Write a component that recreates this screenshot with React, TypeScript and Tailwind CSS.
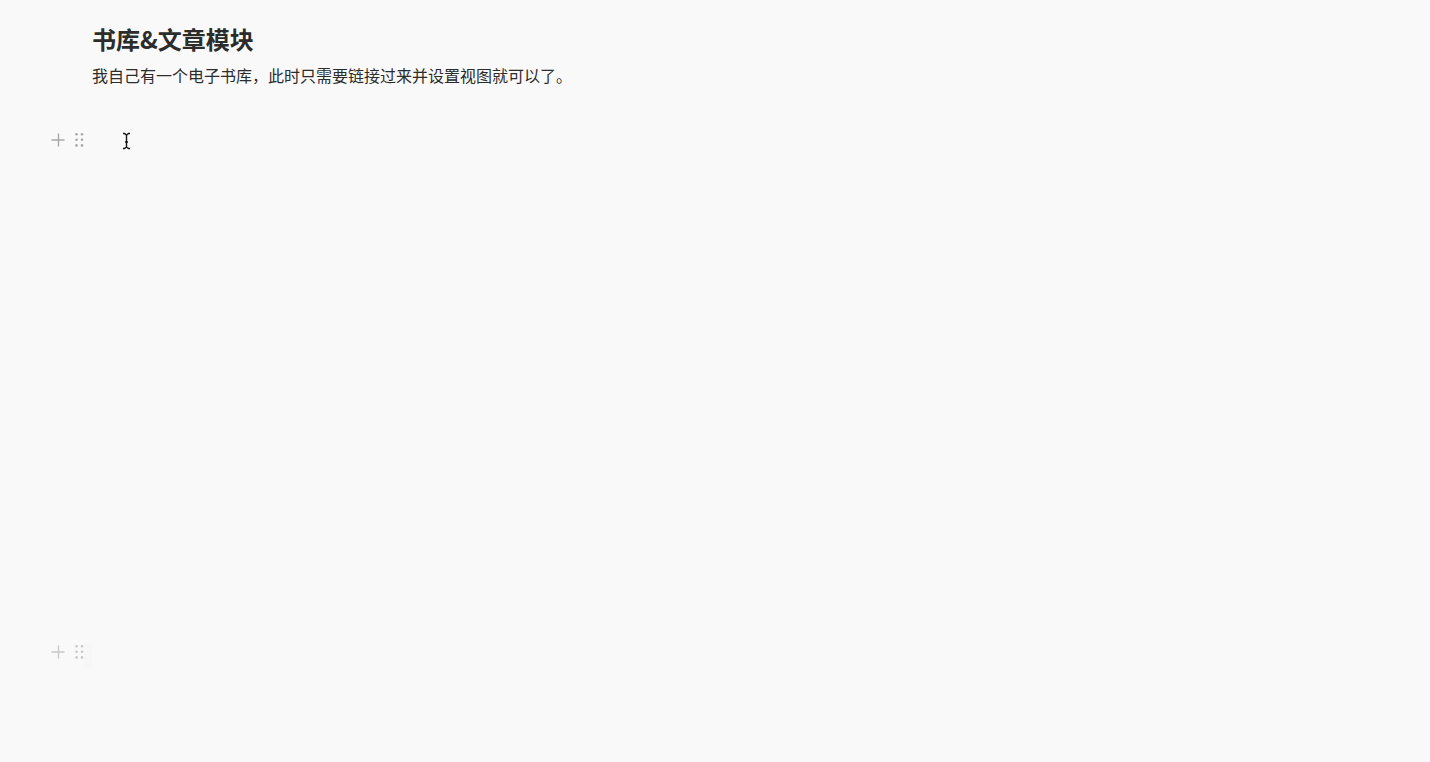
import { clsx } from 'clsx';

type HandleState = 'active' | 'fading';

interface Block {
  id: number;
  type: 'heading' | 'text';
  text?: string;
  handle?: HandleState;
}

// Heading and intro, followed by the empty blocks of the page
const blocks: Block[] = [
  { id: 1, type: 'heading', text: '书库&文章模块' },
  { id: 2, type: 'text', text: '我自己有一个电子书库，此时只需要链接过来并设置视图就可以了。' },
  { id: 3, type: 'text' },
  { id: 4, type: 'text', handle: 'active' },
  ...Array.from({ length: 15 }, (_, i): Block => ({ id: 5 + i, type: 'text' })),
  { id: 20, type: 'text', handle: 'fading' },
];

function PlusIcon() {
  return (
    <svg width="20" height="20" viewBox="0 0 20 20" fill="none" stroke="currentColor" aria-hidden="true">
      <path d="M10.5 3.5v13M3.5 10h13" strokeWidth="1.4" />
    </svg>
  );
}

function GripIcon() {
  return (
    <svg width="20" height="20" viewBox="0 0 20 20" fill="currentColor" aria-hidden="true">
      {[4.3, 9.8, 15.4].map((y) => (
        <g key={y}>
          <circle cx="7.5" cy={y} r="1.3" />
          <circle cx="13" cy={y} r="1.3" />
        </g>
      ))}
    </svg>
  );
}

function BlockHandle({ state }: { state: HandleState }) {
  return (
    <div
      className={clsx(
        'relative flex items-center gap-px',
        state === 'active' ? 'text-[#a8a8a8]' : 'text-[#c8c8c8]'
      )}
    >
      <button type="button" aria-label="添加块" className="size-5">
        <PlusIcon />
      </button>
      <button type="button" aria-label="拖动块" className="size-5">
        <GripIcon />
      </button>
    </div>
  );
}

function TextCursor() {
  return (
    <svg
      className="pointer-events-none absolute top-2 left-7 text-[#161616]"
      width="12"
      height="18"
      viewBox="0 0 12 18"
      fill="none"
      stroke="currentColor"
      strokeWidth="1.4"
      aria-hidden="true"
    >
      <path d="M3 1.5h1.5L6.5 3l2-1.5H10M6.5 3v12M3 16.5h1.5l2-1.5 2 1.5H10M5 10h3" />
    </svg>
  );
}

function BlockRow({ block }: { block: Block }) {
  return (
    <div className={clsx('flex items-center', block.type === 'heading' ? 'h-10' : 'h-8')}>
      <div className="relative flex w-23 shrink-0 justify-end pr-[3px]">
        {block.handle === 'fading' && (
          <span className="absolute top-0 right-0 h-7 w-2 bg-[#f7f7f7]" />
        )}
        {block.handle && <BlockHandle state={block.handle} />}
      </div>
      <div className="relative h-full min-w-0 flex-1">
        {block.type === 'heading' ? (
          <h2 className="text-2xl leading-[38px] font-bold">{block.text}</h2>
        ) : (
          <p className="text-base leading-[30px]">{block.text}</p>
        )}
        {block.handle === 'active' && <TextCursor />}
      </div>
    </div>
  );
}

export default function App() {
  return (
    <main
      lang="zh-CN"
      className="min-h-screen border-r-8 border-b border-r-[#faf8fb] border-b-[#f6f6f6] bg-[#f9f9f9] pt-5 font-['Noto_Sans_CJK_SC',sans-serif] text-[#2c2c2a]"
    >
      {blocks.map((block) => (
        <BlockRow key={block.id} block={block} />
      ))}
    </main>
  );
}
